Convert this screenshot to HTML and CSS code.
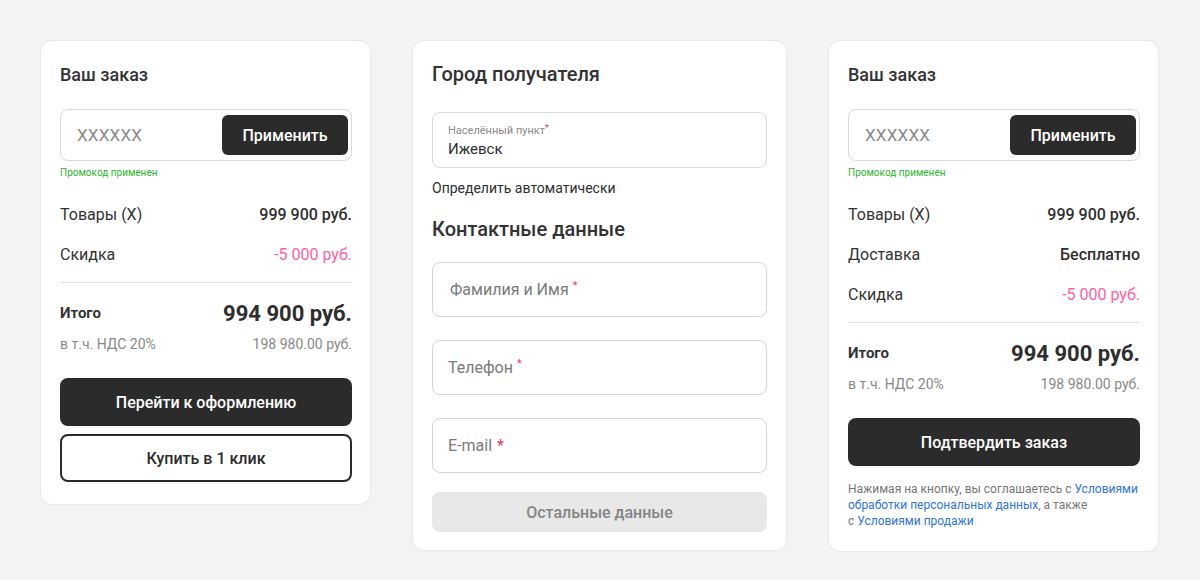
FILE: index.html
```html
<!DOCTYPE html>
<html lang="ru">
<head>
<meta charset="utf-8">
<title>Оформление заказа</title>
<link rel="stylesheet" href="styles.css">
</head>
<body>
<div class="page">
  <section class="card card-narrow">
    <h2 class="title-sm">Ваш заказ</h2>
    <div class="promo">
      <span class="promo-code">XXXXXX</span>
      <button class="btn-apply">Применить</button>
    </div>
    <div class="promo-note">Промокод применен</div>
    <div class="rows">
      <div class="row"><span>Товары (X)</span><span class="val">999 900 руб.</span></div>
      <div class="row"><span>Скидка</span><span class="val-pink">-5 000 руб.</span></div>
    </div>
    <div class="divider"></div>
    <div class="total"><span class="total-label">Итого</span><span class="total-val">994 900 руб.</span></div>
    <div class="vat"><span>в т.ч. НДС 20%</span><span>198 980.00 руб.</span></div>
    <button class="btn-dark">Перейти к оформлению</button>
    <button class="btn-outline">Купить в 1 клик</button>
  </section>

  <section class="card card-wide">
    <h2 class="title-lg">Город получателя</h2>
    <div class="field-city">
      <div class="field-label">Населённый пункт<span class="req-sm">*</span></div>
      <div class="field-value">Ижевск</div>
    </div>
    <div class="auto">Определить автоматически</div>
    <h2 class="title-lg title-contacts">Контактные данные</h2>
    <div class="fields">
      <div class="field"><span class="ph ph-name">Фамилия и Имя</span><span class="req-up">*</span></div>
      <div class="field"><span class="ph">Телефон</span><span class="req-up">*</span></div>
      <div class="field"><span class="ph">E-mail</span><span class="req-big">*</span></div>
    </div>
    <button class="btn-grey">Остальные данные</button>
  </section>

  <section class="card card-narrow card-right">
    <h2 class="title-sm">Ваш заказ</h2>
    <div class="promo">
      <span class="promo-code">XXXXXX</span>
      <button class="btn-apply">Применить</button>
    </div>
    <div class="promo-note">Промокод применен</div>
    <div class="rows">
      <div class="row"><span>Товары (X)</span><span class="val">999 900 руб.</span></div>
      <div class="row"><span>Доставка</span><span class="val">Бесплатно</span></div>
      <div class="row"><span>Скидка</span><span class="val-pink">-5 000 руб.</span></div>
    </div>
    <div class="divider"></div>
    <div class="total"><span class="total-label">Итого</span><span class="total-val">994 900 руб.</span></div>
    <div class="vat"><span>в т.ч. НДС 20%</span><span>198 980.00 руб.</span></div>
    <button class="btn-dark">Подтвердить заказ</button>
    <p class="legal">Нажимая на кнопку, вы соглашаетесь с <a href="#">Условиями</a><br><a href="#">обработки персональных данных</a>, а также<br>с <a href="#">Условиями продажи</a></p>
  </section>
</div>
</body>
</html>
```

FILE: styles.css
```css
* { box-sizing: border-box; }
html, body {
  margin: 0;
  padding: 0;
  background: #f3f3f3;
}
body {
  font-family: Roboto, "Noto Sans", "Liberation Sans", sans-serif;
  color: #2e2e2e;
}
.page {
  display: flex;
  align-items: flex-start;
  gap: 41px;
  padding: 40px 0 0 40px;
}
.card {
  background: #fff;
  border: 1px solid #e8e8e8;
  border-radius: 12px;
  padding: 23px 19px 22px 19px;
  display: flex;
  flex-direction: column;
}
.card-narrow { width: 331px; padding-right: 18px; }
.card-wide { width: 375px; padding-bottom: 18px; }
.card-right { padding-bottom: 22px; }

.title-sm {
  margin: 0;
  font-size: 18px;
  line-height: 22px;
  font-weight: 500;
  color: #333;
}
.title-lg {
  margin: 0;
  font-size: 20px;
  line-height: 20px;
  font-weight: 500;
  color: #333;
}

/* promo */
.promo {
  margin-top: 23px;
  height: 52px;
  border: 1px solid #d9d9d9;
  border-radius: 8px;
  display: flex;
  align-items: center;
  justify-content: space-between;
  padding: 0 3px 0 16px;
}
.promo-code {
  font-size: 17px;
  color: #8a8a8a;
  letter-spacing: 0.2px;
}
.btn-apply {
  width: 126px;
  height: 40px;
  border: none;
  border-radius: 6px;
  background: #2b2b2b;
  color: #fff;
  font-family: inherit;
  font-size: 16px;
  font-weight: 500;
  padding: 0;
}
.promo-note {
  margin-top: 6px;
  font-size: 10px;
  line-height: 12px;
  color: #2db52d;
}

/* rows */
.rows {
  margin-top: 15px;
  display: flex;
  flex-direction: column;
}
.row {
  height: 40px;
  display: flex;
  align-items: center;
  justify-content: space-between;
  font-size: 16px;
  color: #333;
}
.val { font-weight: 500; color: #2e2e2e; }
.val-pink { color: #ff5fa2; }
.divider {
  margin-top: 8px;
  height: 1px;
  background: #e4e4e4;
}
.total {
  margin-top: 15px;
  height: 30px;
  display: flex;
  align-items: center;
  justify-content: space-between;
}
.total-label {
  font-size: 15px;
  font-weight: 700;
  color: #333;
}
.total-val {
  font-size: 22px;
  font-weight: 700;
  color: #2e2e2e;
}
.vat {
  margin-top: 6px;
  height: 20px;
  display: flex;
  align-items: center;
  justify-content: space-between;
  font-size: 14px;
  color: #888;
}

/* buttons */
.btn-dark {
  margin-top: 24px;
  height: 48px;
  border: none;
  border-radius: 8px;
  background: #2b2b2b;
  color: #fff;
  font-family: inherit;
  font-size: 16px;
  font-weight: 500;
}
.btn-outline {
  margin-top: 8px;
  height: 48px;
  border: 2px solid #2b2b2b;
  border-radius: 8px;
  background: #fff;
  color: #2b2b2b;
  font-family: inherit;
  font-size: 16px;
  font-weight: 500;
}

/* middle */
.field-city {
  margin-top: 28px;
  height: 56px;
  border: 1px solid #d9d9d9;
  border-radius: 8px;
  padding: 8px 15px 0 15px;
}
.field-label {
  font-size: 11px;
  line-height: 14px;
  color: #8a8a8a;
}
.req-sm {
  color: #f0365a;
  font-size: 9px;
  vertical-align: 3px;
}
.field-value {
  margin-top: 1px;
  font-size: 15px;
  line-height: 20px;
  color: #2e2e2e;
}
.auto {
  margin-top: 10px;
  font-size: 14px;
  line-height: 20px;
  color: #2e2e2e;
}
.title-contacts {
  margin-top: 21px;
  line-height: 20px;
}
.fields {
  margin-top: 23px;
  display: flex;
  flex-direction: column;
  gap: 23px;
}
.field {
  height: 55px;
  border: 1px solid #d5d5d5;
  border-radius: 8px;
  display: flex;
  align-items: center;
  padding: 0 15px;
  font-size: 16px;
  color: #7a7a7a;
}
.ph-name { margin-left: 2px; }
.req-up {
  color: #f0365a;
  font-size: 11px;
  margin-left: 4px;
  align-self: center;
  position: relative;
  top: -4px;
}
.req-big {
  color: #f0365a;
  font-size: 16px;
  margin-left: 5px;
}
.btn-grey {
  margin-top: 19px;
  height: 40px;
  border: none;
  border-radius: 8px;
  background: #e8e8e8;
  color: #848484;
  font-family: inherit;
  font-size: 16px;
  font-weight: 500;
}

/* right */
.legal {
  margin: 15px 0 0;
  font-size: 12px;
  line-height: 16px;
  color: #777;
  white-space: nowrap;
}
.legal a {
  color: #2f74e0;
  text-decoration: none;
}
```
